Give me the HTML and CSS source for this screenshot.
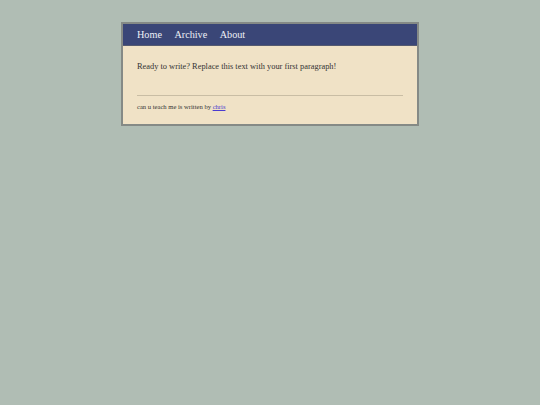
FILE: index.html
```html
<!DOCTYPE html>
<html>
<head>
<meta charset="utf-8">
<link rel="stylesheet" href="styles.css">
</head>
<body>
<div class="page">
  <nav class="nav">
    <a class="nav-link" href="#">Home</a>
    <a class="nav-link" href="#">Archive</a>
    <a class="nav-link" href="#">About</a>
  </nav>
  <main class="content">
    <p class="intro">Ready to write? Replace this text with your first paragraph!</p>
    <hr class="rule">
    <p class="footer">can u teach me is written by <a class="author" href="#">chris</a></p>
  </main>
</div>
</body>
</html>
```
FILE: styles.css
```css
html, body {
  margin: 0;
  padding: 0;
}
body {
  background: #b0bdb4;
  font-family: "Liberation Serif", serif;
  color: #333;
}
.page {
  width: 294px;
  margin: 22px 0 0 121px;
  border: 2px solid #858a86;
  background: #f0e2c6;
}
.nav {
  display: flex;
  gap: 12.5px;
  padding: 0 14px;
  height: 21px;
  align-items: center;
  background: #3a4677;
  border-bottom: 1px solid #555a70;
}
.nav-link {
  color: #eef0f6;
  text-decoration: none;
  font-size: 10.2px;
}
.content {
  padding: 16px 14px 14px;
}
.intro {
  margin: 0;
  font-size: 8.4px;
  color: #333;
}
.rule {
  margin: 24px 0 7px;
  border: 0;
  border-top: 1px solid #c9bda4;
}
.footer {
  margin: 0;
  font-size: 6.6px;
  color: #333;
}
.author {
  color: #4a3bd0;
}
```
